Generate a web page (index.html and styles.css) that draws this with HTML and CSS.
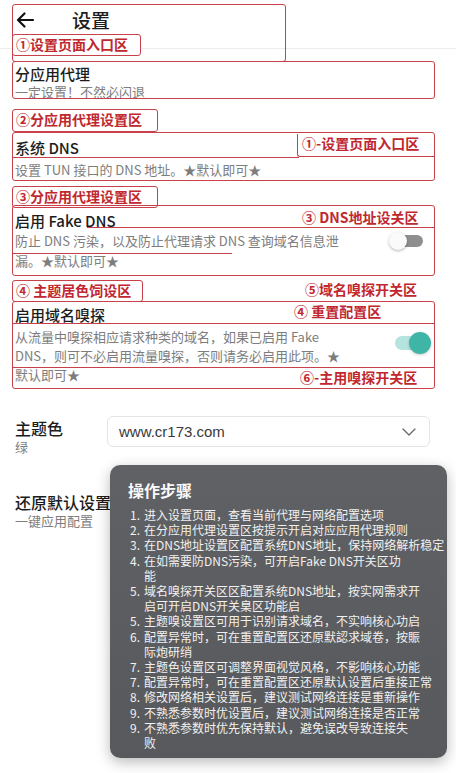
FILE: index.html
```html
<!DOCTYPE html>
<html lang="zh-CN">
<head>
<meta charset="utf-8">
<title>设置</title>
<link rel="stylesheet" href="styles.css">
</head>
<body>
<div class="page">
  <header class="header">
    <svg class="back" width="18" height="16" viewBox="0 0 18 16"><path d="M17 8H2M8.5 1.5L2 8l6.5 6.5" fill="none" stroke="#111" stroke-width="2.2" stroke-linecap="round" stroke-linejoin="round"/></svg>
    <h1 class="title">设置</h1>
  </header>

  <main class="list">
    <section class="item item1">
      <div class="it-title">分应用代理</div>
      <div class="it-sub">一定设置！不然必闪退</div>
    </section>

    <section class="item item2">
      <div class="it-title">系统 DNS</div>
      <div class="it-sub sub2">设置 TUN 接口的 DNS 地址。★默认即可★</div>
    </section>

    <section class="item item3">
      <div class="it-title">启用 Fake DNS</div>
      <div class="desc-row desc3">
        <div class="it-desc">防止 DNS 污染，以及防止代理请求 DNS 查询域名信息泄<br>漏。★默认即可★</div>
        <span class="toggle off"><span class="knob"></span></span>
      </div>
    </section>

    <section class="item item4">
      <div class="it-title">启用域名嗅探</div>
      <div class="desc-row desc4">
        <div class="it-desc lh19">从流量中嗅探相应请求种类的域名，如果已启用 Fake<br>DNS，则可不必启用流量嗅探，否则请务必启用此项。★<br>默认即可★</div>
        <span class="toggle on"><span class="knob"></span></span>
      </div>
    </section>

    <section class="item item5">
      <div class="left-col">
        <div class="it-title big">主题色</div>
        <div class="it-sub">绿</div>
      </div>
      <div class="select">
        <span class="select-text">www.cr173.com</span>
        <svg class="chev" width="14" height="8" viewBox="0 0 14 8"><path d="M1 1l6 6 6-6" fill="none" stroke="#666" stroke-width="1.3" stroke-linecap="round" stroke-linejoin="round"/></svg>
      </div>
    </section>

    <section class="item item6">
      <div class="it-title big">还原默认设置</div>
      <div class="it-sub">一键应用配置</div>
    </section>
  </main>

  <div class="annot">
    <div class="box b-head"></div>
    <div class="box b-row1"></div>
    <div class="label l1">①设置页面入口区</div>
    <div class="label l2">②分应用代理设置区</div>
    <div class="box b-row2"></div>
    <div class="line ln-dns"></div>
    <div class="label l3">①-设置页面入口区</div>
    <div class="label l4">③分应用代理设置区</div>
    <div class="box b-row3"></div>
    <div class="line ln-fake1"></div>
    <div class="line ln-fake2"></div>
    <div class="tag t5">③ DNS地址设关区</div>
    <div class="label l6">④ 主题居色饲设区</div>
    <div class="tag t7">⑤域名嗅探开关区</div>
    <div class="box b-row4"></div>
    <div class="tag t8">④ 重置配置区</div>
    <div class="line ln-sn1"></div>
    <div class="line ln-sn2"></div>
    <div class="tag t9">⑥-主用嗅探开关区</div>
  </div>

  <div class="steps">
    <div class="steps-title">操作步骤</div>
    <ol class="steps-list">
      <li><span class="n">1.</span><span class="t">进入设置页面，查看当前代理与网络配置选项</span></li>
      <li><span class="n">2.</span><span class="t">在分应用代理设置区按提示开启对应应用代理规则</span></li>
      <li><span class="n">3.</span><span class="t">在DNS地址设置区配置系统DNS地址，保持网络解析稳定</span></li>
      <li><span class="n">4.</span><span class="t">在如需要防DNS污染，可开启Fake DNS开关区功<br>能</span></li>
      <li><span class="n">5.</span><span class="t">域名嗅探开关区区配置系统DNS地址，按实网需求开<br>启可开启DNS开关臬区功能启</span></li>
      <li><span class="n">5.</span><span class="t">主题嗅设置区可用于识别请求域名，不实响核心功启</span></li>
      <li><span class="n">6.</span><span class="t">配置异常时，可在重置配置区还原默認求域卷，按賑<br>际炮研绡</span></li>
      <li><span class="n">7.</span><span class="t">主题色设置区可调整界面视觉风格，不影响核心功能</span></li>
      <li><span class="n">7.</span><span class="t">配置异常时，可在重置配置区还原默认设置后重接正常</span></li>
      <li><span class="n">8.</span><span class="t">修改网络相关设置后，建议测试网络连接是重新操作</span></li>
      <li><span class="n">9.</span><span class="t">不熟悉参数时优设置后，建议测试网络连接是否正常</span></li>
      <li><span class="n">9.</span><span class="t">不熟悉参数时优先保持默认，避免误改导致连接失<br>败</span></li>
    </ol>
  </div>
</div>
</body>
</html>
```

FILE: styles.css
```css
* { box-sizing: border-box; }
html, body { margin: 0; padding: 0; background: #fff; }
body {
  font-family: "Noto Sans CJK SC", "Noto Sans", sans-serif;
  color: #1e1e1e;
}
.page { position: relative; width: 456px; height: 773px; overflow: hidden; }

.header {
  height: 49px;
  display: flex;
  align-items: center;
  padding-left: 16px;
  border-bottom: 1px solid #ececec;
}
.back { display: block; margin-top: -9px; }
.title {
  margin: -9px 0 0 38px;
  font-size: 19px;
  font-weight: 500;
  line-height: 24px;
}

.list { padding: 0 15px; }
.it-title { font-size: 15px; line-height: 18px; font-weight: 500; color: #1c1c1c; }
.it-title.big { font-size: 16px; line-height: 20px; }
.it-sub { font-size: 13px; line-height: 18px; color: #7d7d7d; }
.it-desc { font-size: 13px; line-height: 20px; color: #7d7d7d; }
.it-desc.lh19 { line-height: 19px; }

.item1 { margin-top: 16px; }
.item2 { margin-top: 38px; }
.sub2 { margin-top: 3px; line-height: 20px; }
.item3 { margin-top: 32px; }
.desc3 { margin-top: 1px; }
.item4 { margin-top: 35px; }
.desc4 { margin-top: 3px; }
.item5 { margin-top: 34px; display: flex; align-items: flex-start; }
.item6 { margin-top: 36px; }

.desc-row { display: flex; justify-content: space-between; align-items: flex-start; }

.toggle { position: relative; display: block; flex: none; }
.toggle.off { width: 34px; height: 18px; margin: 1px 18px 0 0; }
.toggle.off::before {
  content: ""; position: absolute; left: 4px; right: 0; top: 3px; height: 12px;
  border-radius: 6px; background: #8f8f8f;
}
.toggle.off .knob {
  position: absolute; left: 0; top: 0; width: 18px; height: 18px; border-radius: 50%;
  background: #fafafa; box-shadow: 0 1px 3px rgba(0,0,0,0.3);
}
.toggle.on { width: 36px; height: 22px; margin: 5px 10px 0 0; }
.toggle.on::before {
  content: ""; position: absolute; left: 0; right: 4px; top: 4px; height: 14px;
  border-radius: 7px; background: #b5e3dd;
}
.toggle.on .knob {
  position: absolute; right: 0; top: 0; width: 22px; height: 22px; border-radius: 50%;
  background: #3fb5a8; box-shadow: 0 1px 3px rgba(0,0,0,0.2);
}

.left-col { width: 92px; flex: none; }
.select {
  margin-top: -2px;
  width: 323px; height: 31px;
  border: 1px solid #e4e4e4; border-radius: 6px;
  display: flex; align-items: center; justify-content: space-between;
  padding: 0 13px 0 11px;
}
.select-text { font-family: "Liberation Sans", "Noto Sans", sans-serif; font-size: 15px; color: #3a3a3a; }

/* annotation overlay */
.annot { position: absolute; left: 0; top: 0; width: 456px; height: 400px; pointer-events: none; }
.box, .label, .line, .tag { position: absolute; }
.box { border: 1.4px solid #c8414a; border-radius: 3px; }
.line { height: 1.4px; background: #c8414a; }
.label {
  border: 1.4px solid #c8414a; border-radius: 3px; background: #fff;
  color: #c0272f; font-weight: 700; font-size: 14px; line-height: 19px;
  padding: 0 3px; white-space: nowrap;
}
.tag { color: #c0272f; font-weight: 700; font-size: 14px; line-height: 19px; white-space: nowrap; }

.b-head { left: 12px; top: 4px; width: 274px; height: 58px; }
.b-row1 { left: 12px; top: 61px; width: 423px; height: 38px; }
.l1 { left: 12px; top: 34px; width: 129px; height: 22px; }
.l2 { left: 12px; top: 109px; width: 146px; height: 23px; }
.b-row2 { left: 12px; top: 132px; width: 423px; height: 49px; }
.ln-dns { left: 12px; top: 157px; width: 287px; }
.l3 { left: 297px; top: 134px; width: 138px; height: 23px; border-top: none; border-right: none; border-radius: 0 0 0 3px; background: transparent; padding-left: 4px; }
.l4 { left: 12px; top: 186px; width: 146px; height: 22px; }
.b-row3 { left: 12px; top: 205px; width: 423px; height: 71px; }
.ln-fake1 { left: 87px; top: 227px; width: 348px; }
.ln-fake2 { left: 12px; top: 253px; width: 220px; }
.t5 { left: 302px; top: 208px; }
.l6 { left: 12px; top: 280px; width: 131px; height: 22px; }
.t7 { left: 305px; top: 280px; }
.b-row4 { left: 12px; top: 301px; width: 423px; height: 88px; }
.t8 { left: 294px; top: 302px; }
.ln-sn1 { left: 12px; top: 323px; width: 423px; }
.ln-sn2 { left: 12px; top: 367px; width: 423px; }
.t9 { left: 300px; top: 368px; }

/* steps card */
.steps {
  position: absolute; left: 110px; top: 465px; width: 337px; height: 293px;
  background: linear-gradient(180deg, #606164 0%, #58595c 100%);
  border-radius: 10px;
  box-shadow: 0 4px 14px rgba(0,0,0,0.28);
  padding: 15px 8px 0 18px;
  color: #f1f1f1;
}
.steps-title { font-size: 16px; font-weight: 700; line-height: 20px; color: #fafafa; }
.steps-list { list-style: none; margin: 7px 0 0; padding: 0 0 0 2px; }
.steps-list li { display: flex; font-size: 12px; line-height: 15.2px; }
.steps-list .n { width: 14px; flex: none; }
.steps-list .t { flex: 1; white-space: nowrap; }
```
